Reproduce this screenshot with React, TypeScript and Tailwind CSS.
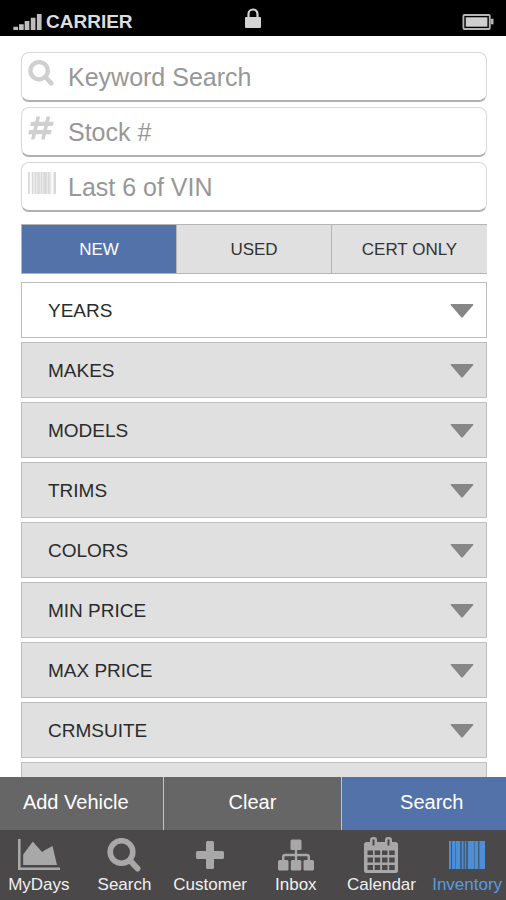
import { ReactNode, useState } from "react";
import clsx from "clsx";

const SearchIcon = () => (
  <svg viewBox="0 0 34 34" className="size-full" fill="none" stroke="currentColor" aria-hidden="true">
    <circle cx="14.5" cy="14" r="11.3" strokeWidth="5.6" />
    <path d="M23 22.5l7.500 8" strokeWidth="6" strokeLinecap="round" />
  </svg>
);

const HashIcon = () => (
  <svg viewBox="0 0 26 24" className="size-full" fill="currentColor" aria-hidden="true">
    <path d="M8.500.5h3.600L6.600 23.500H3zM18.600.5h3.600l-5.500 23h-3.600zM3.200 5.800h22.600l-1 4.200H2.200zM1.200 14h22.600l-1 4.200H.2z" />
  </svg>
);

const BarcodeIcon = () => (
  <svg viewBox="0 0 36 28" preserveAspectRatio="none" className="size-full" fill="currentColor" aria-hidden="true">
    <path d="M0 0h36v28H0z" opacity=".55" />
    <path d="M0 0h2v28H0zM3 0h3v28H3zM7 0h4v28H7zM13 0h1.500v28H13zM16 0h1v28h-1zM19 0h6v28h-6zM26 0h3v28h-3zM30.500 0h5.500v28h-5.500z" />
    <path d="M2 0h1v28H2zM11.500 0h1v28h-1zM14.500 0h1.200v28h-1.200zM17.200 0h1.400v28h-1.400zM29.200 0h1v28h-1z" className="fill-black/20" />
  </svg>
);

const FieldBarcodeIcon = () => (
  <svg viewBox="0 0 28 22" className="size-full" fill="currentColor" aria-hidden="true">
    <path d="M0 0h28v22H0z" opacity=".45" />
    <path d="M0 0h1.500v22H0zM4 0h1v22H4zM7 0h1v22H7zM9.500 0h2v22h-2zM13 0h1v22h-1zM15.500 0h3v22h-3zM20 0h1.500v22H20zM26 0h2v22h-2z" opacity=".6" />
    <path d="M2 0h1.500v22H2zM23.500 0h1.500v22h-1.500z" fill="#fff" />
  </svg>
);

const ChartIcon = () => (
  <svg viewBox="0 0 42 32" className="size-full" fill="currentColor" aria-hidden="true">
    <path d="M0 0h2.600v28.400H42V31H0z" />
    <path d="M5.200 26V15.500L14.800 2.500 24 13l4-2.500L34.500 7 39 26z" />
  </svg>
);

const PlusIcon = () => (
  <svg viewBox="0 0 28 28" className="size-full" fill="currentColor" aria-hidden="true">
    <rect x="10" width="8" height="28" rx="1.500" />
    <rect y="10" width="28" height="8" rx="1.500" />
  </svg>
);

const SitemapIcon = () => (
  <svg viewBox="0 0 36 31" className="size-full" fill="currentColor" aria-hidden="true">
    <rect x="12.500" width="11" height="10.500" rx="1.500" />
    <rect y="20.500" width="10.500" height="10.500" rx="1.500" />
    <rect x="12.800" y="20.500" width="10.500" height="10.500" rx="1.500" />
    <rect x="25.500" y="20.500" width="10.500" height="10.500" rx="1.500" />
    <path d="M18 9v13M5.200 22v-4.500q0-2 2-2h21.600q2 0 2 2V22" fill="none" stroke="currentColor" strokeWidth="2.400" />
  </svg>
);

const CalendarIcon = () => (
  <svg viewBox="0 0 34 36" className="size-full" aria-hidden="true">
    <rect y="5" width="34" height="31" rx="2.500" fill="currentColor" />
    <rect x="6" width="7" height="10" rx="3" fill="currentColor" />
    <rect x="21" width="7" height="10" rx="3" fill="currentColor" />
    <path
      d="M8.500 2.500h2v6h-2zM23.500 2.500h2v6h-2zM3.500 13.500h5.500v4.500H3.500zM10.700 13.500h5.500v4.500h-5.500zM18 13.500h5.500v4.500H18zM25.200 13.500h5.500v4.500h-5.500zM3.500 20.500h5.500v5H3.500zM10.700 20.500h5.500v5h-5.500zM18 20.500h5.500v5H18zM25.200 20.500h5.500v5h-5.500zM3.500 28h5.500v5H3.500zM10.700 28h5.500v5h-5.500zM18 28h5.500v5H18zM25.200 28h5.500v5h-5.500z"
      fill="#4a4849"
    />
  </svg>
);

const StatusBar = () => (
  <div className="grid h-9 shrink-0 grid-cols-3 items-center bg-black px-3 pt-2 text-[#dcdcdc]">
    <div className="flex items-center gap-1">
      <svg viewBox="0 0 31 17" className="h-4 w-[30px]" fill="#bdbdbd" aria-hidden="true">
        <path d="M1 13.500h5V17H1zM7 11h5v6H7zM13 7.500h5V17h-5zM19.500 4h5v13h-5zM26 0h5v17h-5z" />
      </svg>
      <span className="text-[19px] font-bold">CARRIER</span>
    </div>
    <svg viewBox="0 0 16 20" className="-mt-2 h-5 w-4 justify-self-center" aria-hidden="true">
      <path d="M3.500 10V6a4.500 4.500 0 0 1 9 0v4" fill="none" stroke="#d4d4d4" strokeWidth="2.200" />
      <rect y="9" width="16" height="11" rx="1" fill="#d4d4d4" />
    </svg>
    <svg viewBox="0 0 33 17" className="h-4 w-8 justify-self-end" aria-hidden="true">
      <rect x="1" y="1" width="28" height="15" rx="1" fill="none" stroke="#b5b5b5" strokeWidth="2" />
      <rect x="3.500" y="3.500" width="23" height="10" fill="#cfcfcf" />
      <path d="M30 5h3v6h-3z" fill="#b5b5b5" />
    </svg>
  </div>
);

interface SearchFieldProps {
  label: string;
  icon: ReactNode;
}

const SearchField = ({ label, icon }: SearchFieldProps) => (
  <label className="flex h-[50px] items-start rounded-lg border border-b-2 border-[#d8d8d8] border-b-[#b0b0b0] bg-white px-1.5">
    <span className="flex h-10 w-7 shrink-0 items-center text-[#cfcfcf]">{icon}</span>
    <input
      type="text"
      aria-label={label}
      placeholder={label}
      className="ml-3 h-full min-w-0 flex-1 pt-0.5 text-[25px] outline-none placeholder:text-[#979797]"
    />
  </label>
);

const conditions = ["NEW", "USED", "CERT ONLY"];

const filters = [
  "YEARS",
  "MAKES",
  "MODELS",
  "TRIMS",
  "COLORS",
  "MIN PRICE",
  "MAX PRICE",
  "CRMSUITE",
];

const FilterSelect = ({ label, active }: { label: string; active: boolean }) => (
  <div
    className={clsx(
      "relative h-14 shrink-0 border border-[#bdbdbd]",
      active ? "bg-white" : "bg-[#e0e0e0]"
    )}
  >
    <select
      aria-label={label || "More filters"}
      className="size-full appearance-none px-[26px] pt-0.5 text-[19px] text-[#2b2b2b] outline-none"
    >
      <option>{label}</option>
    </select>
    <svg
      viewBox="0 0 24 14"
      className="pointer-events-none absolute top-5 right-3 h-4 w-6"
      fill="#868686"
      aria-hidden="true"
    >
      <path d="M1.500 0h21q1.500 0 .5 1.300L13 13q-1 1-2 0L1 1.300Q0 0 1.500 0z" />
    </svg>
  </div>
);

interface TabLinkProps {
  label: string;
  icon: ReactNode;
  size: string;
  active?: boolean;
}

const tabs: TabLinkProps[] = [
  { label: "MyDays", icon: <ChartIcon />, size: "h-8 w-[42px]" },
  { label: "Search", icon: <SearchIcon />, size: "size-[34px]" },
  { label: "Customer", icon: <PlusIcon />, size: "size-7" },
  { label: "Inbox", icon: <SitemapIcon />, size: "h-8 w-9" },
  { label: "Calendar", icon: <CalendarIcon />, size: "h-9 w-[34px]" },
  { label: "Inventory", icon: <BarcodeIcon />, size: "h-7 w-9", active: true },
];

const TabLink = ({ label, icon, size, active }: TabLinkProps) => (
  <a
    href="#"
    className={clsx(
      "flex flex-col items-center text-[17px] leading-5",
      active ? "text-[#5b9be0]" : "text-[#f0f0f0]"
    )}
  >
    <span className="flex h-10 items-center">
      <span className={clsx("block", size, active ? "text-[#4d8fd6]" : "text-[#a8a8a8]")}>
        {icon}
      </span>
    </span>
    {label}
  </a>
);

export default function App() {
  const [condition, setCondition] = useState("NEW");

  return (
    <div className="flex h-screen flex-col overflow-hidden bg-white font-['Liberation_Sans',Arial,sans-serif]">
      <StatusBar />

      <main className="flex min-h-0 flex-1 flex-col overflow-hidden pt-4 pr-[19px] pl-[21px]">
        <div className="flex flex-col gap-[5px]">
          <SearchField label="Keyword Search" icon={<span className="size-[26px]"><SearchIcon /></span>} />
          <SearchField label="Stock #" icon={<span className="h-6 w-[26px]"><HashIcon /></span>} />
          <SearchField label="Last 6 of VIN" icon={<span className="h-[22px] w-7"><FieldBarcodeIcon /></span>} />
        </div>

        <div className="mt-3 grid h-[50px] shrink-0 grid-cols-3 divide-x divide-[#b5b5b5] border-y border-l border-[#b5b5b5]">
          {conditions.map((item) => (
            <button
              key={item}
              type="button"
              aria-pressed={item === condition}
              onClick={() => setCondition(item)}
              className={clsx(
                "pt-0.5 text-[17px]",
                item === condition ? "bg-[#5372aa] text-white" : "bg-[#e0e0e0] text-[#333]"
              )}
            >
              {item}
            </button>
          ))}
        </div>

        <div className="mt-2 flex flex-col gap-1">
          {filters.map((label, index) => (
            <FilterSelect key={label} label={label} active={index === 0} />
          ))}
          <FilterSelect label="" active={false} />
        </div>
      </main>

      <div className="grid h-[53px] shrink-0 grid-cols-[13fr_14fr_13fr] divide-x divide-[#c4c4c4] bg-[#666] text-xl text-white">
        <button type="button" className="pr-3 pb-1">Add Vehicle</button>
        <button type="button" className="pb-1">Clear</button>
        <button type="button" className="bg-[#5372aa] pb-1 pl-4">Search</button>
      </div>

      <nav className="h-[70px] shrink-0 overflow-hidden bg-[#4a4849] pt-[5px]">
        <div className="-mx-1 grid grid-cols-6">
          {tabs.map((tab) => (
            <TabLink key={tab.label} {...tab} />
          ))}
        </div>
      </nav>
    </div>
  );
}
